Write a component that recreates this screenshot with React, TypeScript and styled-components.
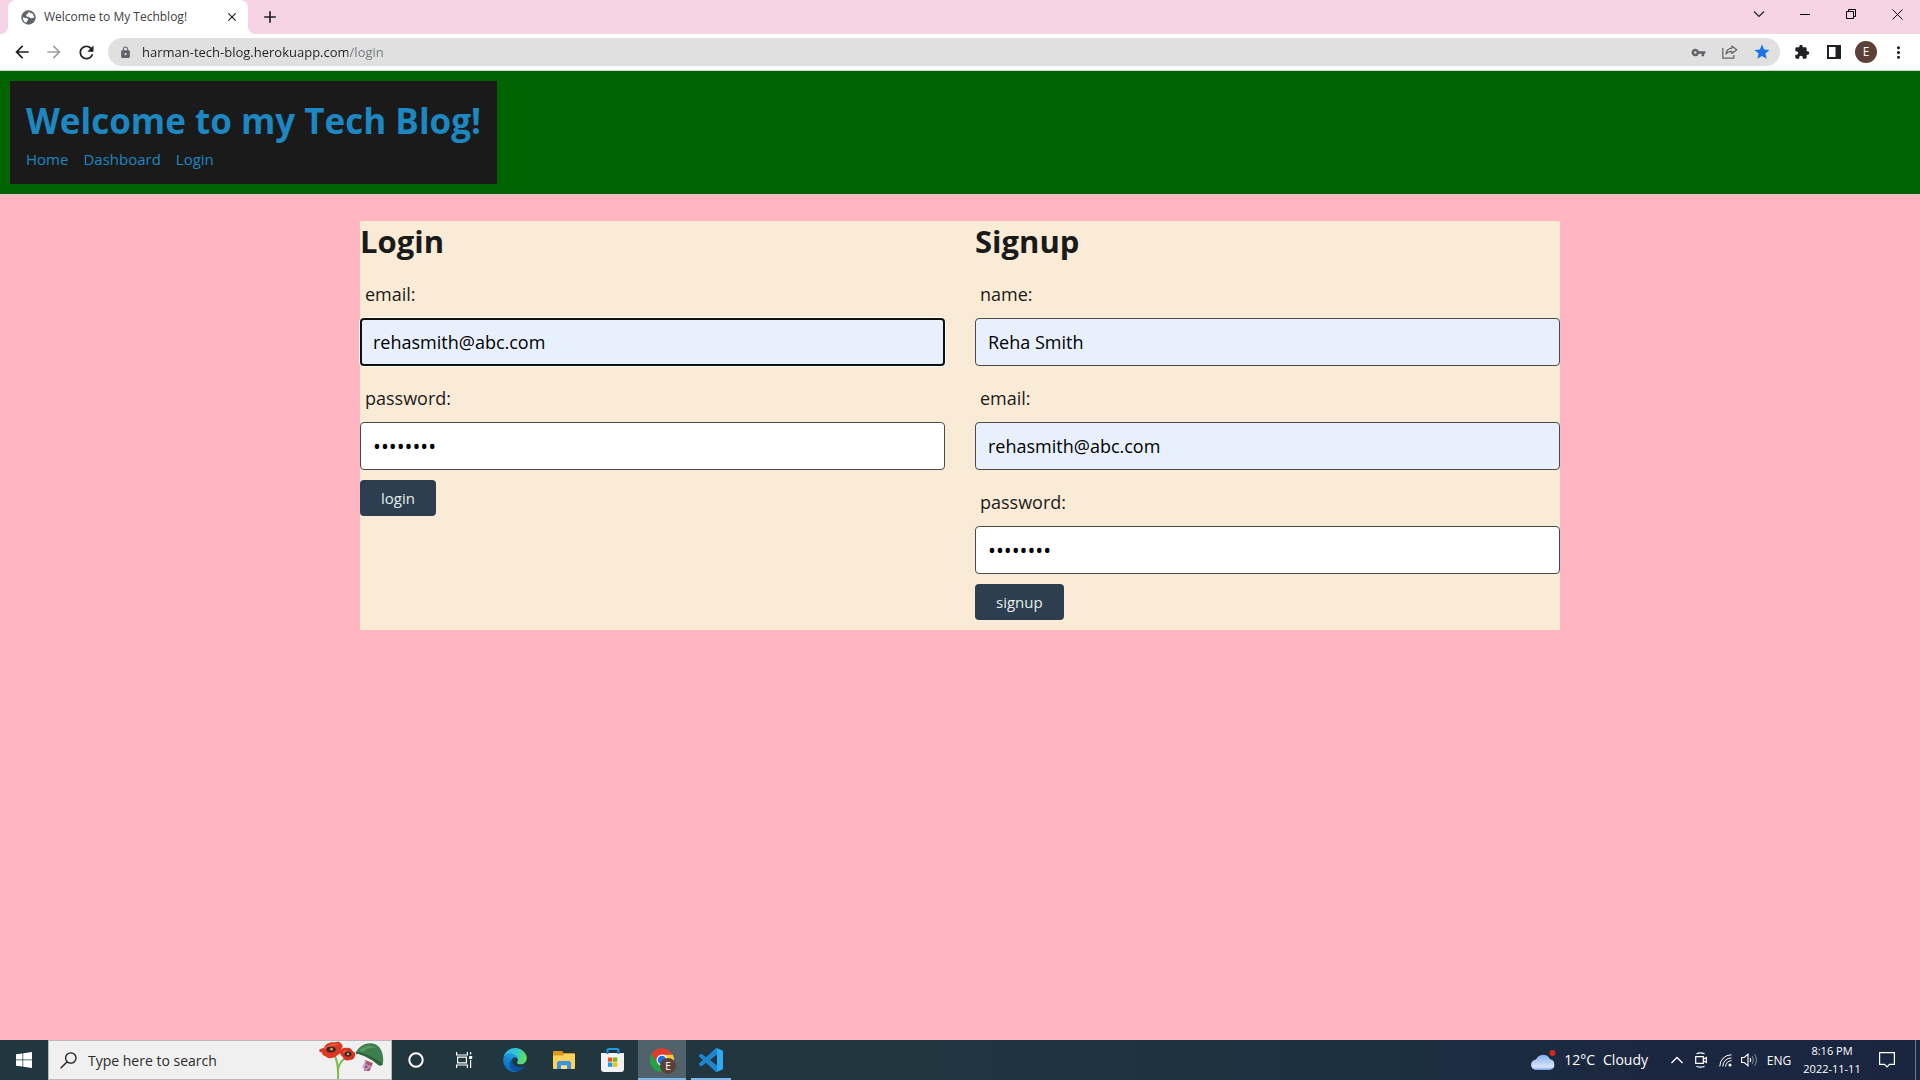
import React from "react";
import styled, { createGlobalStyle, css } from "styled-components";
import {
  MdArrowBack,
  MdArrowForward,
  MdRefresh,
  MdLock,
  MdVpnKey,
  MdStar,
  MdExtension,
  MdMoreVert,
  MdAdd,
  MdClose,
} from "react-icons/md";

const uiFont = `"Segoe UI", "Open Sans", "Noto Sans", sans-serif`;

const GlobalStyle = createGlobalStyle`
  *, *::before, *::after { box-sizing: border-box; }
  body {
    margin: 0;
    background: #ffb6c1;
    font-family: ${uiFont};
    color: #1a1a1a;
  }
  button, input { font-family: inherit; }
  h1, h2, p { margin: 0; }
`;

const Screen = styled.div`
  display: flex;
  flex-direction: column;
  min-height: 100vh;
`;

/* ---------- browser chrome ---------- */

const TabStrip = styled.div`
  display: flex;
  height: 34px;
  padding-left: 8px;
  background: #f6d4e3;
`;

const Tab = styled.div`
  position: relative;
  display: flex;
  align-items: center;
  flex: 0 0 240px;
  padding: 0 8px 0 13px;
  border-radius: 8px 8px 0 0;
  background: #fff;
  font-size: 12px;
  line-height: 16px;
  color: #3c4043;

  &::before,
  &::after {
    content: "";
    position: absolute;
    bottom: 0;
    width: 8px;
    height: 8px;
  }
  &::before {
    left: -8px;
    background: radial-gradient(circle at 0 0, transparent 8px, #fff 8px);
  }
  &::after {
    right: -8px;
    background: radial-gradient(circle at 100% 0, transparent 8px, #fff 8px);
  }
`;

const TabTitle = styled.span`
  flex: 1;
  margin-left: 8px;
  white-space: nowrap;
`;

const IconButton = styled.button<{ $width?: number; $color?: string }>`
  display: flex;
  align-items: center;
  justify-content: center;
  flex: none;
  width: ${(p) => p.$width ?? 32}px;
  padding: 0;
  border: 0;
  background: none;
  color: ${(p) => p.$color ?? "#202124"};
`;

const NewTabButton = styled(IconButton)`
  margin-left: 8px;
`;

const WindowControls = styled.div`
  display: flex;
  margin-left: auto;
  padding-bottom: 6px;
`;

const Toolbar = styled.div`
  display: flex;
  align-items: center;
  height: 37px;
  padding: 0 6px;
  border-bottom: 1px solid #d2d3d4;
  background: #fff;
`;

const Omnibox = styled.div`
  display: flex;
  align-items: center;
  flex: 1;
  height: 28px;
  margin: 0 6px;
  padding: 0 2px 0 11px;
  border-radius: 14px;
  background: #e0e0e0;
  color: #5f6368;
`;

const AddressInput = styled.input`
  flex: 1;
  min-width: 0;
  height: 28px;
  margin-left: 10px;
  padding: 0;
  border: 0;
  outline: 0;
  font-size: 13px;
  color: #202124;
  background: linear-gradient(90deg, #202124 206px, #70757a 206px);
  background-clip: text;
  -webkit-text-fill-color: transparent;
`;

const Avatar = styled.span`
  display: flex;
  align-items: center;
  justify-content: center;
  width: 22px;
  height: 22px;
  border-radius: 50%;
  background: #5d4037;
  color: #fff;
  font-size: 12px;
  line-height: 16px;
`;

/* ---------- blog page ---------- */

const BlogHeader = styled.header`
  display: flex;
  padding: 10px;
  border-bottom: 1px solid #e8c3c3;
  background: #006400;
`;

const Brand = styled.div`
  padding: 16px 16px 10px;
  background: #1a1a1a;
  color: #1c87c0;
`;

const BlogTitle = styled.h1`
  font-size: 35px;
  line-height: 47px;
  font-weight: 700;
`;

const BlogNav = styled.nav`
  display: flex;
  gap: 15px;
`;

const NavLink = styled.a`
  font-size: 15px;
  line-height: 30px;
  color: inherit;
  text-decoration: none;
`;

const Main = styled.main`
  flex: 1;
  padding: 26px 16px;
`;

const FormsCard = styled.div`
  display: grid;
  grid-template-columns: 1fr 1fr;
  gap: 30px;
  max-width: 1200px;
  margin: 0 auto;
  padding-bottom: 10px;
  background: #faebd7;
`;

const FormTitle = styled.h2`
  font-size: 31px;
  line-height: 41px;
  font-weight: 700;
`;

const Field = styled.div`
  display: flex;
  flex-direction: column;
  padding-top: 8px;
`;

const FieldLabel = styled.label`
  padding-left: 5px;
  font-size: 18px;
  line-height: 48px;
`;

const FieldInput = styled.input<{ $filled?: boolean; $active?: boolean }>`
  width: 100%;
  height: 48px;
  padding: 0 12px;
  border: 1px solid #4a4a4a;
  border-radius: 4px;
  outline: 0;
  background: ${(p) => (p.$filled ? "#e8f0fe" : "#fff")};
  color: #000;
  font-size: 18px;
  &[type="password"] {
    font-size: 21px;
  }
  ${(p) =>
    p.$active &&
    css`
      padding: 0 11px;
      border: 2px solid #101010;
      box-shadow: 0 0 0 1px #fff;
    `}
`;

const SubmitButton = styled.button`
  height: 36px;
  margin-top: 10px;
  padding: 0 21px;
  border: 0;
  border-radius: 4px;
  background: #2c3e50;
  color: #e6efe9;
  font-size: 15px;
`;

/* ---------- desktop taskbar ---------- */

const Taskbar = styled.footer`
  display: flex;
  height: 40px;
  background: linear-gradient(90deg, #21373f 0%, #21363f 45%, #1c3140 70%, #1b2740 86%, #1a2540 100%);
  color: #fff;
`;

const TaskButton = styled.button<{ $state?: "active" | "open" }>`
  display: flex;
  align-items: center;
  justify-content: center;
  position: relative;
  width: 48px;
  padding: 0;
  border: 0;
  background: ${(p) => (p.$state === "active" ? "#52626a" : "none")};
  color: #fff;

  &::after {
    content: "";
    position: absolute;
    bottom: 0;
    left: ${(p) => (p.$state === "active" ? 0 : 4)}px;
    right: ${(p) => (p.$state === "active" ? 0 : 4)}px;
    height: 2px;
    background: ${(p) => (p.$state ? "#76b9ed" : "none")};
  }
`;

const SearchBox = styled.label`
  display: flex;
  align-items: center;
  width: 344px;
  padding: 0 6px 0 11px;
  border: 1px solid #b9b9b9;
  background: #f0f0f0;
  color: #1a1a1a;
`;

const SearchInput = styled.input`
  flex: 1;
  min-width: 0;
  margin-left: 11px;
  padding: 0;
  border: 0;
  outline: 0;
  background: none;
  font-size: 14px;
  &::placeholder {
    color: #2b2b2b;
    opacity: 1;
  }
`;

const PinnedApps = styled.div`
  display: flex;
  gap: 1px;
  margin-left: 3px;
`;

const Tray = styled.div`
  display: flex;
  align-items: center;
  margin-left: auto;
`;

const Weather = styled.button`
  display: flex;
  align-items: center;
  gap: 8px;
  margin-right: 17px;
  padding: 0;
  border: 0;
  background: none;
  color: #fff;
  font-size: 14px;
  line-height: 20px;
`;

const TrayButton = styled(IconButton)`
  width: 24px;
  height: 40px;
  color: #fff;
`;

const Language = styled.button`
  width: 36px;
  padding: 0;
  border: 0;
  background: none;
  color: #fff;
  font-size: 12px;
`;

const Clock = styled.button`
  width: 70px;
  padding: 0;
  border: 0;
  background: none;
  color: #fff;
  font-size: 11px;
  line-height: 18px;
`;

const ActionCenter = styled(IconButton)`
  width: 40px;
  height: 40px;
  color: #fff;
`;

const ShowDesktop = styled.button`
  align-self: stretch;
  width: 5px;
  margin-left: 8px;
  padding: 0;
  border: 0;
  border-left: 1px solid #6e7788;
  background: none;
`;

/* ---------- drawings ---------- */

const GlobeIcon = () => (
  <svg width="15" height="15" viewBox="0 0 15 15" aria-hidden="true">
    <circle cx="7.5" cy="7.5" r="7.2" fill="#5f6368" />
    <path
      d="M8.6 2C7 2.200 7.200 3.600 6.300 4.100 5 4.500 4.800 5.600 5.600 6.600c.9.6 2.300.2 3.100 1 .7.9 1.700.6 2.700.3.8-.1 1.300.1 1.700.4.1-2.200-.7-4.200-2.500-5.300-.4.500-1.300.6-2-.9zM1.800 6.900c.9 1 2.200.9 3.400 1 1.200.3 2.200 1 1.900 2.100-.4.700-1.200.8-1.400 1.500 0 .6-.1 1-.5 1.300C2.900 11.700 1.600 9.500 1.800 6.900z"
      fill="#fff"
    />
  </svg>
);

const ChevronDown = () => (
  <svg width="12" height="8" viewBox="0 0 12 8" fill="none" stroke="#202124" strokeWidth="1.2" aria-hidden="true">
    <path d="M1 1.500l5 5 5-5" />
  </svg>
);

const MinimizeIcon = () => (
  <svg width="10" height="10" viewBox="0 0 10 10" aria-hidden="true">
    <path d="M0 5h10v1H0z" fill="#000" />
  </svg>
);

const RestoreIcon = () => (
  <svg width="10" height="10" viewBox="0 0 10 10" fill="none" stroke="#000" aria-hidden="true">
    <path d="M.5 2.500h7v7h-7zM2.500 2.500v-2h7v7h-2" />
  </svg>
);

const CloseWindowIcon = () => (
  <svg width="11" height="11" viewBox="0 0 11 11" fill="none" stroke="#000" aria-hidden="true">
    <path d="M.5.5l10 10M10.500.5l-10 10" />
  </svg>
);

const ShareIcon = () => (
  <svg width="16" height="14" viewBox="0 0 16 14" fill="none" stroke="#5f6368" strokeWidth="1.2" aria-hidden="true">
    <path d="M.8 3v10.200h11V10" />
    <path d="M9.800 1l5 3.800-5 3.800V6.300C7.300 6.300 5.300 7.200 4 9c.3-3.200 2.300-5.400 5.800-5.800z" strokeLinejoin="round" />
  </svg>
);

const SidePanelIcon = () => (
  <svg width="14" height="14" viewBox="0 0 14 14" aria-hidden="true">
    <path d="M0 0h14v14H0zM2 2v10h6.500V2z" fill="#202124" fillRule="evenodd" />
  </svg>
);

const WindowsIcon = () => (
  <svg width="16" height="16" viewBox="0 0 16 16" fill="#fff" aria-hidden="true">
    <path d="M0 2.300l6.500-.9v6.200H0zM7.200 1.300L16 0v7.600H7.200zM0 8.300h6.500v6.300L0 13.700zM7.200 8.300H16V16l-8.800-1.300z" />
  </svg>
);

const MagnifierIcon = () => (
  <svg width="17" height="17" viewBox="0 0 17 17" fill="none" stroke="#1a1a1a" strokeWidth="1.3" aria-hidden="true">
    <circle cx="10.8" cy="6" r="5.2" />
    <path d="M7.200 9.700L.6 16.300" />
  </svg>
);

const PoppyArt = () => (
  <svg width="66" height="38" viewBox="0 0 66 38" aria-hidden="true">
    <path d="M15.500 14c3 6 4 13 3.500 24M26.500 17c-5 3-7.500 8-7.500 14" stroke="#7cbb4c" strokeWidth="2" fill="none" />
    <path d="M0 9.500c1-2 3-2 5-2.500 1-4 6-6.500 10-5.500 3-1 6-1 7 1 2 1 2 4 0 6 1 3-2 5-4 6-3 3-9 4-11 1-3-1-4-2-4-4-1 0-3-1-3-2z" fill="#dc3a20" />
    <path d="M21.500 10c1-3 4-4 6-3 3-1 5 1 6 3 2 1 4 3 2.500 5-1 3-3 4-5 4-3 1-7 0-7-3-2-1-3.500-4-2.500-6z" fill="#d5341e" />
    <path d="M5 8c4-5 11-6 15-4-4 0-9 1-11 4zM23.500 10.500c3-2 7-1 10 2-4-1-6-1-8 0z" fill="#f0654a" />
    <ellipse cx="12" cy="8.5" rx="4.8" ry="3" fill="#43232a" />
    <ellipse cx="29" cy="13" rx="3.6" ry="2.8" fill="#43232a" />
    <circle cx="12.5" cy="8.2" r="1.4" fill="#d8a53a" />
    <circle cx="29" cy="13" r="1.2" fill="#d8a53a" />
    <path d="M46 19l8 3-3.500 8H45z" fill="#a65a63" />
    <path d="M45 23l7 3M47 20l-3 6 3 3 4-4" stroke="#c9a3e0" strokeWidth="1.3" fill="none" />
    <path d="M37 11C41 4 49 .5 56 3c7 3 9 12 8 20-1 2-3 2-5 1-5-5-13-9-20-11-2 0-3-1-2-2z" fill="#3f7f4d" />
    <path d="M40 10c4-5 11-7 17-3-5-1-10 0-13 4z" fill="#5a9a62" />
    <path d="M37 11c9 1 19 5 26.500 12.500-1.500 1.500-3.500.5-4.500-.5-5-4-12-8-19-10-2 0-4-1-3-2z" fill="#2f5f3c" />
  </svg>
);

const CortanaIcon = () => (
  <svg width="16" height="16" viewBox="0 0 16 16" fill="none" stroke="#fff" strokeWidth="2" aria-hidden="true">
    <circle cx="8" cy="8" r="6.7" />
  </svg>
);

const TaskViewIcon = () => (
  <svg width="17" height="16" viewBox="0 0 17 16" fill="none" stroke="#fff" strokeWidth="1.2" aria-hidden="true">
    <path d="M.6 0v3h10.800V0M.6 16v-3h10.800v3M1.600 5.200h8.800v5.600H1.600zM14.600 0v2.500M14.600 8v8" />
    <path d="M13.200 4h3v3h-3z" fill="#fff" stroke="none" />
  </svg>
);

const EdgeIcon = () => (
  <svg width="24" height="24" viewBox="4 0 257 260" aria-hidden="true">
    <defs>
      <linearGradient id="edgeA" x1="63" y1="178" x2="241" y2="178" gradientUnits="userSpaceOnUse">
        <stop offset="0" stopColor="#0c59a4" />
        <stop offset="1" stopColor="#114a8b" />
      </linearGradient>
      <linearGradient id="edgeB" x1="140" y1="90" x2="45" y2="235" gradientUnits="userSpaceOnUse">
        <stop offset="0" stopColor="#1b9de2" />
        <stop offset="1" stopColor="#0b6bc0" />
      </linearGradient>
      <linearGradient id="edgeC" x1="10" y1="60" x2="250" y2="130" gradientUnits="userSpaceOnUse">
        <stop offset="0" stopColor="#35b4ee" />
        <stop offset=".5" stopColor="#2fc6d3" />
        <stop offset="1" stopColor="#66e450" />
      </linearGradient>
    </defs>
    <path
      fill="url(#edgeA)"
      d="M235.680 195.460a93.730 93.730 0 0 1-10.540 4.710 101.870 101.870 0 0 1-35.900 6.460c-47.320 0-88.540-32.550-88.540-74.320A31.480 31.480 0 0 1 117.130 105c-42.800 1.800-53.800 46.400-53.800 72.530 0 73.880 68.090 81.370 82.760 81.370 7.910 0 19.840-2.300 27-4.560l1.310-.44a128.340 128.340 0 0 0 66.600-52.800 4 4 0 0 0-5.320-5.640z"
    />
    <path
      fill="url(#edgeB)"
      d="M110.340 246.340A79.200 79.200 0 0 1 87.600 225a80.720 80.720 0 0 1 29.530-120c3.120-1.470 8.450-4.130 15.540-4a32.350 32.350 0 0 1 25.690 13 31.880 31.880 0 0 1 6.360 18.660c0-.21 24.460-79.600-80-79.600-43.900 0-80 41.660-80 78.210a130.150 130.150 0 0 0 12.110 56 128 128 0 0 0 156.380 67.110 75.550 75.550 0 0 1-62.780-8z"
    />
    <path
      fill="url(#edgeC)"
      d="M156.940 153.780c-.81 1.050-3.300 2.500-3.300 5.660 0 2.610 1.700 5.120 4.720 7.230 14.380 10 41.490 8.680 41.560 8.680a59.560 59.560 0 0 0 30.270-8.350 61.380 61.380 0 0 0 30.430-52.880c.26-22.410-8-37.310-11.340-43.910C228.090 28.760 182.350.51 132.610.51a128 128 0 0 0-128 126.200c.48-36.540 36.800-66.050 80-66.050 3.500 0 23.460.34 42 10.070 16.340 8.580 24.900 18.940 30.850 29.210 6.180 10.670 7.280 24.150 7.280 29.520s-2.740 13.330-7.800 19.910z"
    />
  </svg>
);

const ExplorerIcon = () => (
  <svg width="22" height="18" viewBox="0 0 22 18" aria-hidden="true">
    <path d="M0 1q0-1 1-1h8l1.500 2H21q1 0 1 1v4H0z" fill="#d99a1c" />
    <path d="M0 4.500h10L11.500 3H21q1 0 1 1v13q0 1-1 1H1q-1 0-1-1z" fill="#fbd35b" />
    <path d="M4 18v-6q0-2 2-2h10q2 0 2 2v6h-4v-3.500H8V18z" fill="#3d93dc" />
    <path d="M8 14.500h6V18H8z" fill="#fbe08a" />
  </svg>
);

const StoreIcon = () => (
  <svg width="24" height="24" viewBox="0 0 24 24" aria-hidden="true">
    <path d="M6.500 6V2.500q0-1.500 1.500-1.500h8q1.500 0 1.500 1.500V6" fill="none" stroke="#1d9ce6" strokeWidth="2" />
    <path d="M0 5h23v16q0 3-3 3H3q-3 0-3-3z" fill="#f2f2f2" />
    <path d="M6.500 4v2M17.500 4v2" stroke="#1478c8" strokeWidth="2" />
    <path d="M7 9.500h4.300v4.300H7z" fill="#f25022" />
    <path d="M12 9.500h4.300v4.300H12z" fill="#7fba00" />
    <path d="M7 14.500h4.300v4.300H7z" fill="#00a4ef" />
    <path d="M12 14.500h4.300v4.300H12z" fill="#ffb900" />
  </svg>
);

const ChromeWrap = styled.span`
  position: relative;
  width: 24px;
  height: 24px;
`;

const ProfileBadge = styled.span`
  position: absolute;
  left: 10px;
  top: 10px;
  width: 16px;
  height: 16px;
  border-radius: 50%;
  background: #5d4037;
  color: #fff;
  font-size: 10px;
  line-height: 16px;
  text-align: center;
`;

const ChromeIcon = () => (
  <ChromeWrap>
    <svg width="24" height="24" viewBox="0 0 24 24" aria-hidden="true">
      <path d="M12 6.500h10.700A12 12 0 0 1 12 24l4.800-9.200z" fill="#fcc934" />
      <path d="M1.600 6l5.600 8.800 4.800 3v6.200A12 12 0 0 1 1.600 6z" fill="#1ea446" />
      <path d="M1.600 6A12 12 0 0 1 22.400 6.500H12a5.500 5.500 0 0 0-5 8.200z" fill="#e33b2e" />
      <circle cx="12" cy="12" r="5.5" fill="#fff" />
      <circle cx="12" cy="12" r="4.3" fill="#1a73e8" />
    </svg>
    <ProfileBadge>E</ProfileBadge>
  </ChromeWrap>
);

const CodeIcon = () => (
  <svg width="24" height="24" viewBox="0 0 24 24" aria-hidden="true">
    <path
      fill="#1f87cf"
      d="M23.150 2.587L18.210.21a1.494 1.494 0 0 0-1.705.29l-9.460 8.630-4.120-3.128a.999.999 0 0 0-1.276.057L.327 7.261A1 1 0 0 0 .326 8.740L3.899 12 .326 15.260a1 1 0 0 0 .001 1.479L1.650 17.940a.999.999 0 0 0 1.276.057l4.120-3.128 9.460 8.630a1.492 1.492 0 0 0 1.704.29l4.942-2.377A1.500 1.500 0 0 0 24 20.060V3.939a1.500 1.500 0 0 0-.85-1.352zm-5.146 14.861L10.826 12l7.178-5.448v10.896z"
    />
    <path d="M18 .2l5.150 2.387A1.500 1.500 0 0 1 24 3.939V20.060a1.500 1.500 0 0 1-.85 1.352L18 23.800z" fill="#32a8f0" />
  </svg>
);

const CloudIcon = () => (
  <svg width="25" height="20" viewBox="0 0 25 20" aria-hidden="true">
    <defs>
      <linearGradient id="cloud" x1="0" y1="0" x2="0" y2="1">
        <stop offset="0" stopColor="#85b0ee" />
        <stop offset=".8" stopColor="#d8e6fb" />
        <stop offset="1" stopColor="#6f9de0" />
      </linearGradient>
    </defs>
    <path d="M5.500 20a5.200 5.200 0 0 1-.5-10.400A7.600 7.600 0 0 1 18.800 9 5.600 5.600 0 0 1 18.800 20z" fill="url(#cloud)" />
    <circle cx="21.5" cy="3" r="3" fill="#cf2a1c" />
  </svg>
);

const CaretUpIcon = () => (
  <svg width="12" height="8" viewBox="0 0 12 8" fill="none" stroke="#fff" strokeWidth="1.3" aria-hidden="true">
    <path d="M.5 7L6 1.500 11.500 7" />
  </svg>
);

const MeetNowIcon = () => (
  <svg width="12" height="16" viewBox="0 0 12 16" fill="none" stroke="#fff" strokeWidth="1.2" aria-hidden="true">
    <path d="M1.500 1.800q4-2 8 0M1.500 14.200q4 2 8 0M.7 4.700h7.600v6.600H.7zM8.500 7l2.800-1.500v5L8.500 9" />
  </svg>
);

const WifiIcon = () => (
  <svg width="13" height="13" viewBox="0 0 13 13" fill="none" stroke="#fff" aria-hidden="true">
    <path d="M.8 12.500A11.500 11.500 0 0 1 12.500.8M3.800 12.500A8.600 8.600 0 0 1 12.500 3.900M6.600 12.500a5.800 5.800 0 0 1 5.900-5.800" />
    <circle cx="11" cy="11" r="1.5" fill="#fff" stroke="none" />
  </svg>
);

const SpeakerIcon = () => (
  <svg width="17" height="14" viewBox="0 0 17 14" fill="none" stroke="#fff" strokeWidth="1.1" aria-hidden="true">
    <path d="M.6 4.500h2.600L7 1.200v11.600L3.200 9.500H.6zM9 5q1.300 2 0 4" />
    <path d="M11 3q2.700 4 0 8M13.500 1.200q4 5.800 0 11.600" stroke="#7f8899" />
  </svg>
);

const NotificationIcon = () => (
  <svg width="16" height="16" viewBox="0 0 16 16" fill="none" stroke="#fff" strokeWidth="1.2" aria-hidden="true">
    <path d="M.6.6h14.800v11.800h-4.900L8 15l-2.500-2.600H.6z" />
  </svg>
);

/* ---------- page ---------- */

type FieldSpec = {
  id: string;
  label: string;
  type: string;
  value: string;
  filled?: boolean;
  active?: boolean;
};

const loginFields: FieldSpec[] = [
  { id: "login-email", label: "email:", type: "text", value: "rehasmith@abc.com", filled: true, active: true },
  { id: "login-password", label: "password:", type: "password", value: "password" },
];

const signupFields: FieldSpec[] = [
  { id: "signup-name", label: "name:", type: "text", value: "Reha Smith", filled: true },
  { id: "signup-email", label: "email:", type: "text", value: "rehasmith@abc.com", filled: true },
  { id: "signup-password", label: "password:", type: "password", value: "password" },
];

function AccountForm({ title, fields, action }: { title: string; fields: FieldSpec[]; action: string }) {
  return (
    <form onSubmit={(e) => e.preventDefault()}>
      <FormTitle>{title}</FormTitle>
      {fields.map((f) => (
        <Field key={f.id}>
          <FieldLabel htmlFor={f.id}>{f.label}</FieldLabel>
          <FieldInput id={f.id} type={f.type} defaultValue={f.value} $filled={f.filled} $active={f.active} />
        </Field>
      ))}
      <SubmitButton type="submit">{action}</SubmitButton>
    </form>
  );
}

export default function App() {
  return (
    <Screen>
      <GlobalStyle />
      <TabStrip>
        <Tab>
          <GlobeIcon />
          <TabTitle>Welcome to My Techblog!</TabTitle>
          <IconButton $width={16} aria-label="Close tab">
            <MdClose size={14} />
          </IconButton>
        </Tab>
        <NewTabButton $width={28} aria-label="New tab">
          <MdAdd size={20} />
        </NewTabButton>
        <WindowControls>
          <IconButton $width={46} aria-label="Search tabs"><ChevronDown /></IconButton>
          <IconButton $width={46} aria-label="Minimize"><MinimizeIcon /></IconButton>
          <IconButton $width={46} aria-label="Restore"><RestoreIcon /></IconButton>
          <IconButton $width={46} aria-label="Close"><CloseWindowIcon /></IconButton>
        </WindowControls>
      </TabStrip>
      <Toolbar>
        <IconButton aria-label="Back"><MdArrowBack size={20} /></IconButton>
        <IconButton aria-label="Forward" $color="#a0a1a3"><MdArrowForward size={20} /></IconButton>
        <IconButton aria-label="Reload"><MdRefresh size={21} /></IconButton>
        <Omnibox>
          <MdLock size={13} />
          <AddressInput aria-label="Address" defaultValue="harman-tech-blog.herokuapp.com/login" />
          <IconButton $color="#5f6368" aria-label="Passwords"><MdVpnKey size={15} /></IconButton>
          <IconButton aria-label="Share"><ShareIcon /></IconButton>
          <IconButton $color="#1a73e8" aria-label="Bookmark"><MdStar size={18} /></IconButton>
        </Omnibox>
        <IconButton aria-label="Extensions"><MdExtension size={16} /></IconButton>
        <IconButton aria-label="Side panel"><SidePanelIcon /></IconButton>
        <IconButton aria-label="Profile"><Avatar>E</Avatar></IconButton>
        <IconButton aria-label="Menu"><MdMoreVert size={19} /></IconButton>
      </Toolbar>

      <BlogHeader>
        <Brand>
          <BlogTitle>Welcome to my Tech Blog!</BlogTitle>
          <BlogNav>
            <NavLink href="#home">Home</NavLink>
            <NavLink href="#dashboard">Dashboard</NavLink>
            <NavLink href="#login">Login</NavLink>
          </BlogNav>
        </Brand>
      </BlogHeader>
      <Main>
        <FormsCard>
          <AccountForm title="Login" fields={loginFields} action="login" />
          <AccountForm title="Signup" fields={signupFields} action="signup" />
        </FormsCard>
      </Main>

      <Taskbar>
        <TaskButton aria-label="Start"><WindowsIcon /></TaskButton>
        <SearchBox>
          <MagnifierIcon />
          <SearchInput aria-label="Search" placeholder="Type here to search" />
          <PoppyArt />
        </SearchBox>
        <TaskButton aria-label="Cortana"><CortanaIcon /></TaskButton>
        <TaskButton aria-label="Task view"><TaskViewIcon /></TaskButton>
        <PinnedApps>
          <TaskButton aria-label="Edge"><EdgeIcon /></TaskButton>
          <TaskButton aria-label="File Explorer"><ExplorerIcon /></TaskButton>
          <TaskButton aria-label="Store"><StoreIcon /></TaskButton>
          <TaskButton aria-label="Chrome" $state="active"><ChromeIcon /></TaskButton>
          <TaskButton aria-label="Code" $state="open"><CodeIcon /></TaskButton>
        </PinnedApps>
        <Tray>
          <Weather>
            <CloudIcon />
            <span>12°C</span>
            <span>Cloudy</span>
          </Weather>
          <TrayButton aria-label="Hidden icons"><CaretUpIcon /></TrayButton>
          <TrayButton aria-label="Meet now"><MeetNowIcon /></TrayButton>
          <TrayButton aria-label="Network"><WifiIcon /></TrayButton>
          <TrayButton aria-label="Volume"><SpeakerIcon /></TrayButton>
          <Language>ENG</Language>
          <Clock>
            8:16 PM
            <br />
            2022-11-11
          </Clock>
          <ActionCenter aria-label="Notifications"><NotificationIcon /></ActionCenter>
          <ShowDesktop aria-label="Show desktop" />
        </Tray>
      </Taskbar>
    </Screen>
  );
}
